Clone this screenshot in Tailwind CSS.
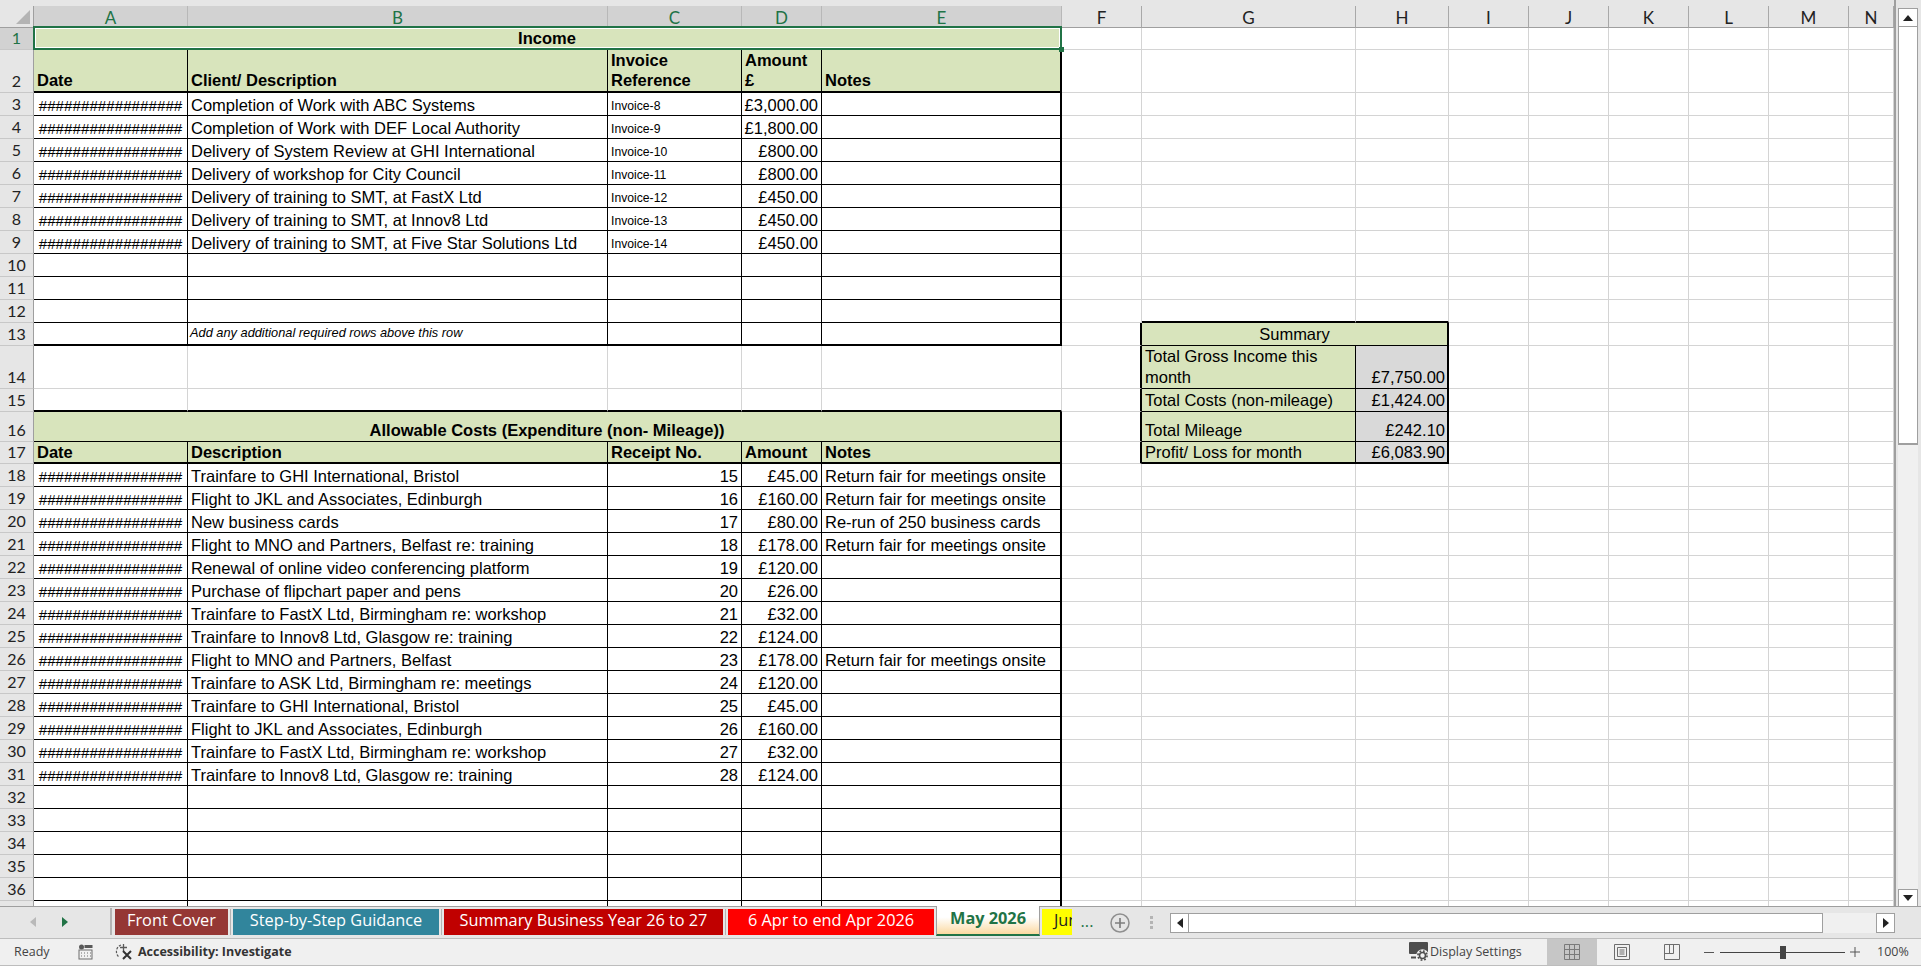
<!DOCTYPE html>
<html>
<head>
<meta charset="utf-8">
<title>May 2026</title>
<script src="https://cdn.jsdelivr.net/npm/@tailwindcss/browser@4"></script>
</head>
<body class="m-0 overflow-hidden">
<div class="w-[1921px] h-[966px] overflow-hidden flex flex-col bg-[#e6e6e6] font-['Liberation_Sans',sans-serif] text-black">

  <!-- sheet and vertical scrollbar -->
  <div class="h-[906px] flex shrink-0">
    <div class="relative w-[1896px] h-[906px] pt-[6px] overflow-hidden border-r-2 border-[#9f9f9f]">
      <table class="table-fixed border-separate border-spacing-0 w-[1894px] bg-white">
        <colgroup>
          <col class="w-[34px]"><col class="w-[154px]"><col class="w-[420px]"><col class="w-[134px]"><col class="w-[80px]"><col class="w-[240px]"><col class="w-[80px]"><col class="w-[214px]"><col class="w-[93px]"><col class="w-[80px]"><col class="w-[80px]"><col class="w-[80px]"><col class="w-[80px]"><col class="w-[80px]"><col class="w-[45px]">
        </colgroup>
        <thead id="head"></thead>
        <tbody id="rows"></tbody>
      </table>
      <!-- corner triangle -->
      <svg class="absolute left-[16px] top-[10px]" width="14" height="14" viewBox="0 0 14 14"><path d="M14 0V14H0Z" fill="#b4b4b4"/></svg>
      <!-- selected range A1:E1 -->
      <div class="absolute left-[33px] top-[26px] w-[1029px] h-[24px] border-2 border-[#217346] shadow-[inset_0_0_0_1px_#ffffff]"></div>
      <div class="absolute left-[1059px] top-[47px] w-[5px] h-[5px] bg-[#217346]"></div>
    </div>
    <div class="w-[25px] h-[906px] flex flex-col items-start pl-[2px] pt-[8px]">
      <div class="w-[20px] h-[19px] bg-white border border-[#9f9f9f] flex items-center justify-center shrink-0">
        <svg width="10" height="6" viewBox="0 0 10 6"><path d="M5 0L10 6H0Z" fill="#222"/></svg>
      </div>
      <div class="w-[20px] h-[418px] bg-white border-x border-b-2 border-[#9f9f9f] shrink-0"></div>
      <div class="w-[20px] flex-1 bg-[#f0f0f0]"></div>
      <div class="w-[20px] h-[18px] mb-[-1px] bg-white border border-[#9f9f9f] flex items-center justify-center shrink-0">
        <svg width="10" height="6" viewBox="0 0 10 6"><path d="M0 0H10L5 6Z" fill="#222"/></svg>
      </div>
    </div>
  </div>

  <!-- sheet tabs and horizontal scrollbar -->
  <div class="h-[32px] shrink-0 flex items-start border-t border-[#9f9f9f] font-['Open_Sans',sans-serif] text-[16.3px] text-white relative">
    <div class="w-[112px] h-[27px] mt-[1px] flex items-center pl-[30px] gap-[26px] border-r-2 border-[#b4b4b4]">
      <svg width="6" height="10" viewBox="0 0 6 10"><path d="M6 0V10L0 5Z" fill="#b9b9b9"/></svg>
      <svg width="6" height="10" viewBox="0 0 6 10"><path d="M0 0L6 5L0 10Z" fill="#217346"/></svg>
    </div>
    <div class="flex items-start mt-[2px] ml-[3px] h-[26px] whitespace-nowrap">
      <div class="w-[113px] h-[26px] pb-[3px] bg-[#953735] flex items-center justify-center">Front Cover</div>
      <div class="w-[1px] h-[26px] mx-[2px] bg-[#b4b4b4]"></div>
      <div class="w-[206px] h-[26px] pb-[3px] bg-[#31859c] flex items-center justify-center">Step-by-Step Guidance</div>
      <div class="w-[1px] h-[26px] mx-[2px] bg-[#b4b4b4]"></div>
      <div class="w-[279px] h-[26px] pb-[3px] bg-[#c00000] flex items-center justify-center">Summary Business Year 26 to 27</div>
      <div class="w-[1px] h-[26px] mx-[2px] bg-[#b4b4b4]"></div>
      <div class="w-[206px] h-[26px] pb-[3px] bg-[#ff0000] flex items-center justify-center">6 Apr to end Apr 2026</div>
    </div>
    <div class="w-[104px] h-[30px] -mt-[1px] ml-[2px] pb-[4px] bg-gradient-to-b from-white from-40% to-[#fbd9a0] border-x border-b-2 border-[#9f9f9f] border-b-[#217346] flex items-center justify-center font-bold text-[#217346] whitespace-nowrap">May 2026</div>
    <div class="w-[30px] h-[26px] mt-[2px] ml-[2px] bg-[#ffff00] text-[#222] pl-[12px] overflow-hidden whitespace-nowrap leading-[22px]">June 2026</div>
    <div class="w-[30px] text-center text-[#217346] leading-[24px] mt-[2px]">...</div>
    <svg class="ml-[8px] mt-[6px] shrink-0" width="20" height="20" viewBox="0 0 20 20"><circle cx="10" cy="10" r="9" fill="none" stroke="#8f8f8f" stroke-width="1.5"/><path d="M10 5V15M5 10H15" stroke="#7f7f7f" stroke-width="1.7"/></svg>
    <div class="ml-[20px] mt-[9px] flex flex-col gap-[2px]">
      <div class="w-[3px] h-[3px] bg-[#b4b4b4]"></div><div class="w-[3px] h-[3px] bg-[#b4b4b4]"></div><div class="w-[3px] h-[3px] bg-[#b4b4b4]"></div>
    </div>
    <div class="ml-[17px] mt-[6px] w-[725px] h-[20px] flex">
      <div class="w-[19px] h-[20px] bg-white border border-[#9f9f9f] flex items-center justify-center shrink-0">
        <svg width="6" height="10" viewBox="0 0 6 10"><path d="M6 0V10L0 5Z" fill="#222"/></svg>
      </div>
      <div class="w-[634px] h-[20px] bg-white border-y border-r border-[#9f9f9f] shrink-0"></div>
      <div class="flex-1 bg-[#f0f0f0]"></div>
      <div class="w-[19px] h-[20px] bg-white border border-[#9f9f9f] flex items-center justify-center shrink-0">
        <svg width="6" height="10" viewBox="0 0 6 10"><path d="M0 0L6 5L0 10Z" fill="#222"/></svg>
      </div>
    </div>
  </div>

  <!-- status bar -->
  <div class="flex-1 flex items-center bg-[#f0f0f0] border-t border-b border-[#bdbdbd] font-['Open_Sans',sans-serif] text-[12.5px] text-[#444]">
    <span class="ml-[14px] w-[64px]">Ready</span>
    <svg width="15" height="16" viewBox="0 0 15 16" class="shrink-0">
      <circle cx="3.5" cy="3" r="2.5" fill="#595959"/>
      <rect x="6.5" y="1" width="8" height="3" fill="#595959"/>
      <rect x="1" y="6" width="13" height="9" fill="none" stroke="#6d6d6d"/>
      <path d="M3 9H4M6 9H7M9 9H10M12 9H13M3 12H4M6 12H7M9 12H10M12 12H13" stroke="#6d6d6d"/>
    </svg>
    <svg width="20" height="20" viewBox="0 0 20 20" class="ml-[21px] shrink-0">
      <path d="M7 3A7 7 0 0 0 5 15" fill="none" stroke="#595959" stroke-width="1.2" stroke-dasharray="2.4 1.4"/>
      <path d="M9.5 2V9M6 5.5H13" stroke="#595959" stroke-width="1.3"/>
      <path d="M9 9L17 17M17 9L9 17" stroke="#333" stroke-width="2"/>
    </svg>
    <span class="ml-[4px] font-bold text-[#333] whitespace-nowrap">Accessibility: Investigate</span>
    <div class="flex-1"></div>
    <svg width="20" height="20" viewBox="0 0 20 20" class="shrink-0">
      <rect x="0" y="0" width="19" height="12" rx="1" fill="#4d4d4d"/>
      <path d="M2 15.5H7" stroke="#4d4d4d" stroke-width="2"/>
      <circle cx="13.5" cy="13.5" r="6.2" fill="#f0f0f0"/>
      <circle cx="13.5" cy="13.5" r="4.6" fill="none" stroke="#4d4d4d" stroke-width="1.6" stroke-dasharray="1.8 1.8"/>
      <circle cx="13.5" cy="13.5" r="3" fill="none" stroke="#4d4d4d" stroke-width="1.6"/>
    </svg>
    <span class="ml-[1px] w-[117px] whitespace-nowrap">Display Settings</span>
    <div class="w-[50px] h-[26px] bg-[#c6c6c6] flex items-center justify-center">
      <svg width="16" height="16" viewBox="0 0 16 16"><path d="M.5.5H15.5V15.5H.5ZM5.5.5V15.5M10.5.5V15.5M.5 5.5H15.5M.5 10.5H15.5" fill="none" stroke="#7a7a7a"/></svg>
    </div>
    <div class="w-[50px] flex justify-center">
      <svg width="16" height="16" viewBox="0 0 16 16"><path d="M.5.5H15.5V15.5H.5ZM3.5 3.5H12.5V12.5H3.5ZM5.5 6H10.5M5.5 8H10.5M5.5 10H10.5" fill="none" stroke="#6d6d6d"/></svg>
    </div>
    <div class="w-[50px] flex justify-center">
      <svg width="16" height="16" viewBox="0 0 16 16"><path d="M.5.5H15.5V15.5H.5ZM.5 9.5H9.5V.5M5.5.5V9.5" fill="none" stroke="#6d6d6d"/></svg>
    </div>
    <div class="ml-[7px] w-[10px] h-[1px] bg-[#555]"></div>
    <div class="relative ml-[6px] w-[125px] h-[1px] bg-[#444]">
      <div class="absolute left-[60px] -top-[6px] w-[6px] h-[13px] bg-[#444]"></div>
    </div>
    <svg width="10" height="10" viewBox="0 0 10 10" class="ml-[5px]"><path d="M5 0V10M0 5H10" stroke="#555"/></svg>
    <span class="ml-[17px] mr-[13px] w-[31px] whitespace-nowrap">100%</span>
  </div>
</div>

<script>
  const cols = ["A","B","C","D","E","F","G","H","I","J","K","L","M","N"];
  const green = "bg-[#d8e4bc]";
  const base = "overflow-hidden whitespace-nowrap align-bottom text-[16.5px] leading-[19px] pl-[3px] pr-[3px]";
  const hash = "#################";

  const income = [
    ["Completion of Work with ABC Systems","Invoice-8","£3,000.00"],
    ["Completion of Work with DEF Local Authority","Invoice-9","£1,800.00"],
    ["Delivery of System Review at GHI International","Invoice-10","£800.00"],
    ["Delivery of workshop for City Council","Invoice-11","£800.00"],
    ["Delivery of training to SMT, at FastX Ltd","Invoice-12","£450.00"],
    ["Delivery of training to SMT, at Innov8 Ltd","Invoice-13","£450.00"],
    ["Delivery of training to SMT, at Five Star Solutions Ltd","Invoice-14","£450.00"],
  ];
  const ret = "Return fair for meetings onsite";
  const costs = [
    ["Trainfare to GHI International, Bristol",15,"£45.00",ret],
    ["Flight to JKL and Associates, Edinburgh",16,"£160.00",ret],
    ["New business cards",17,"£80.00","Re-run of 250 business cards"],
    ["Flight to MNO and Partners, Belfast re: training",18,"£178.00",ret],
    ["Renewal of online video conferencing platform",19,"£120.00",""],
    ["Purchase of flipchart paper and pens",20,"£26.00",""],
    ["Trainfare to FastX Ltd, Birmingham re: workshop",21,"£32.00",""],
    ["Trainfare to Innov8 Ltd, Glasgow re: training",22,"£124.00",""],
    ["Flight to MNO and Partners, Belfast",23,"£178.00",ret],
    ["Trainfare to ASK Ltd, Birmingham re: meetings",24,"£120.00",""],
    ["Trainfare to GHI International, Bristol",25,"£45.00",""],
    ["Flight to JKL and Associates, Edinburgh",26,"£160.00",""],
    ["Trainfare to FastX Ltd, Birmingham re: workshop",27,"£32.00",""],
    ["Trainfare to Innov8 Ltd, Glasgow re: training",28,"£124.00",""],
  ];

  function td(text, cls, attrs) {
    return `<td class="${base} ${cls}" ${attrs || ""}>${text}</td>`;
  }

  // column letters
  let head = `<tr class="h-[22px]"><th class="bg-[#e6e6e6] border-r border-b border-[#9f9f9f] h-[22px]"></th>`;
  cols.forEach((c, i) => {
    const sel = i < 5;
    head += `<th class="h-[22px] p-0 pt-[1px] font-normal font-['Lato',sans-serif] text-[17px] leading-[19px] border-b border-[#9f9f9f] ${sel ? "bg-[#d2d2d2] text-[#217346] border-r border-r-[#b8b8b8]" : "bg-[#e6e6e6] text-[#222] border-r border-r-[#a8a8a8]"}">${c}</th>`;
  });
  document.getElementById("head").innerHTML = head + "</tr>";

  // cells F to N: plain gridlines, with the summary box in G and H
  function rightSide(n) {
    const grid = "border-r border-b border-[#d4d4d4]";
    let out = "";
    if (n === 13) {
      out += td("", "border-r-2 border-b border-r-black border-b-[#d4d4d4]");
      out += td("Summary", `${green} text-center !leading-[21px] border-r-2 border-b border-black`, 'colspan="2"');
    } else if (n === 12) {
      out += td("", grid);
      out += td("", "border-r border-b-2 border-r-[#d4d4d4] border-b-black");
      out += td("", "border-r border-b-2 border-r-[#d4d4d4] border-b-black");
    } else if (n >= 14 && n <= 17) {
      const sum = {
        14: ['Total Gross Income this<br>month', "£7,750.00"],
        15: ["Total Costs (non-mileage)", "£1,424.00"],
        16: ["Total Mileage", "£242.10"],
        17: ["Profit/ Loss for month", "£6,083.90"],
      }[n];
      const bottom = n === 17 ? "border-b-2 !leading-[20px]" : "border-b !leading-[21px]";
      out += td("", "border-r-2 border-b border-r-black border-b-[#d4d4d4]");
      out += td(sum[0], `${green} border-r ${bottom} border-black`);
      out += td(sum[1], `bg-[#d9d9d9] text-right !pr-[2px] border-r-2 ${bottom} border-black`);
    } else {
      out += td("", grid) + td("", grid) + td("", grid);
    }
    for (let i = 0; i < 6; i++) out += td("", grid);
    return out;
  }

  function rowLabel(n) {
    const on = n === 1;
    return `<td class="p-0 pb-[1px] align-bottom text-center font-['Lato',sans-serif] text-[16px] leading-[20px] border-r border-r-[#9f9f9f] border-b border-b-[#c8c8c8] ${on ? "bg-[#d2d2d2] text-[#217346]" : "bg-[#e6e6e6] text-[#222]"}">${n === 37 ? "" : n}</td>`;
  }

  const heights = { 1: "h-[22px]", 2: "h-[43px]", 14: "h-[43px]", 16: "h-[30px]", 17: "h-[22px]" };
  const line = "border-r border-b border-black";
  const lineEnd = "border-r-2 border-b border-black";
  const thickB = "border-r border-b-2 border-black";
  const thickEnd = "border-r-2 border-b-2 border-black";
  const title = `${green} font-bold text-center !leading-[21px] ${lineEnd}`;
  const hdr2 = `${green} font-bold !leading-[20px] pb-[1px] ${thickB}`;
  const hdr2End = `${green} font-bold !leading-[20px] pb-[1px] ${thickEnd}`;
  const hdr17 = `${green} font-bold !leading-[20px] ${thickB}`;
  const hdr17End = `${green} font-bold !leading-[20px] ${thickEnd}`;
  const hashCell = `${line} text-center !text-[15.2px] !px-0`;
  let html = "";

  for (let n = 1; n <= 37; n++) {
    let cells = "";
    if (n === 1) {
      cells = td("Income", title, 'colspan="5"');
    } else if (n === 2) {
      cells = td("Date", hdr2) + td("Client/ Description", hdr2)
        + td("Invoice<br>Reference", hdr2) + td("Amount<br>£", hdr2) + td("Notes", hdr2End);
    } else if (n >= 3 && n <= 9) {
      const r = income[n - 3];
      cells = td(hash, hashCell) + td(r[0], line)
        + td(r[1], `${line} !text-[12.2px] !leading-[17px]`) + td(r[2], `${line} text-right !pl-0`) + td("", lineEnd);
    } else if (n >= 10 && n <= 12) {
      cells = td("", line) + td("", line) + td("", line) + td("", line) + td("", lineEnd);
    } else if (n === 13) {
      cells = td("", thickB) + td("Add any additional required rows above this row", `${thickB} !text-[12.8px] !leading-[20px] pb-[1px] italic !pl-[2px]`)
        + td("", thickB) + td("", thickB) + td("", thickEnd);
    } else if (n === 14) {
      const g = "border-r border-b border-[#d4d4d4]";
      cells = td("", g) + td("", g) + td("", g) + td("", g) + td("", g);
    } else if (n === 15) {
      const g = "border-r border-r-[#d4d4d4] border-b-2 border-b-black";
      cells = td("", g) + td("", g) + td("", g) + td("", g) + td("", g);
    } else if (n === 16) {
      cells = td("Allowable Costs (Expenditure (non- Mileage))", title, 'colspan="5"');
    } else if (n === 17) {
      cells = td("Date", hdr17) + td("Description", hdr17) + td("Receipt No.", hdr17)
        + td("Amount", hdr17) + td("Notes", hdr17End);
    } else if (n >= 18 && n <= 31) {
      const r = costs[n - 18];
      cells = td(hash, hashCell) + td(r[0], line)
        + td(r[1], `${line} text-right`) + td(r[2], `${line} text-right !pl-0`) + td(r[3], lineEnd);
    } else {
      cells = td("", line) + td("", line) + td("", line) + td("", line) + td("", lineEnd);
    }
    html += `<tr class="${heights[n] || "h-[23px]"}">${rowLabel(n)}${cells}${rightSide(n)}</tr>`;
  }
  document.getElementById("rows").innerHTML = html;
</script>
</body>
</html>
